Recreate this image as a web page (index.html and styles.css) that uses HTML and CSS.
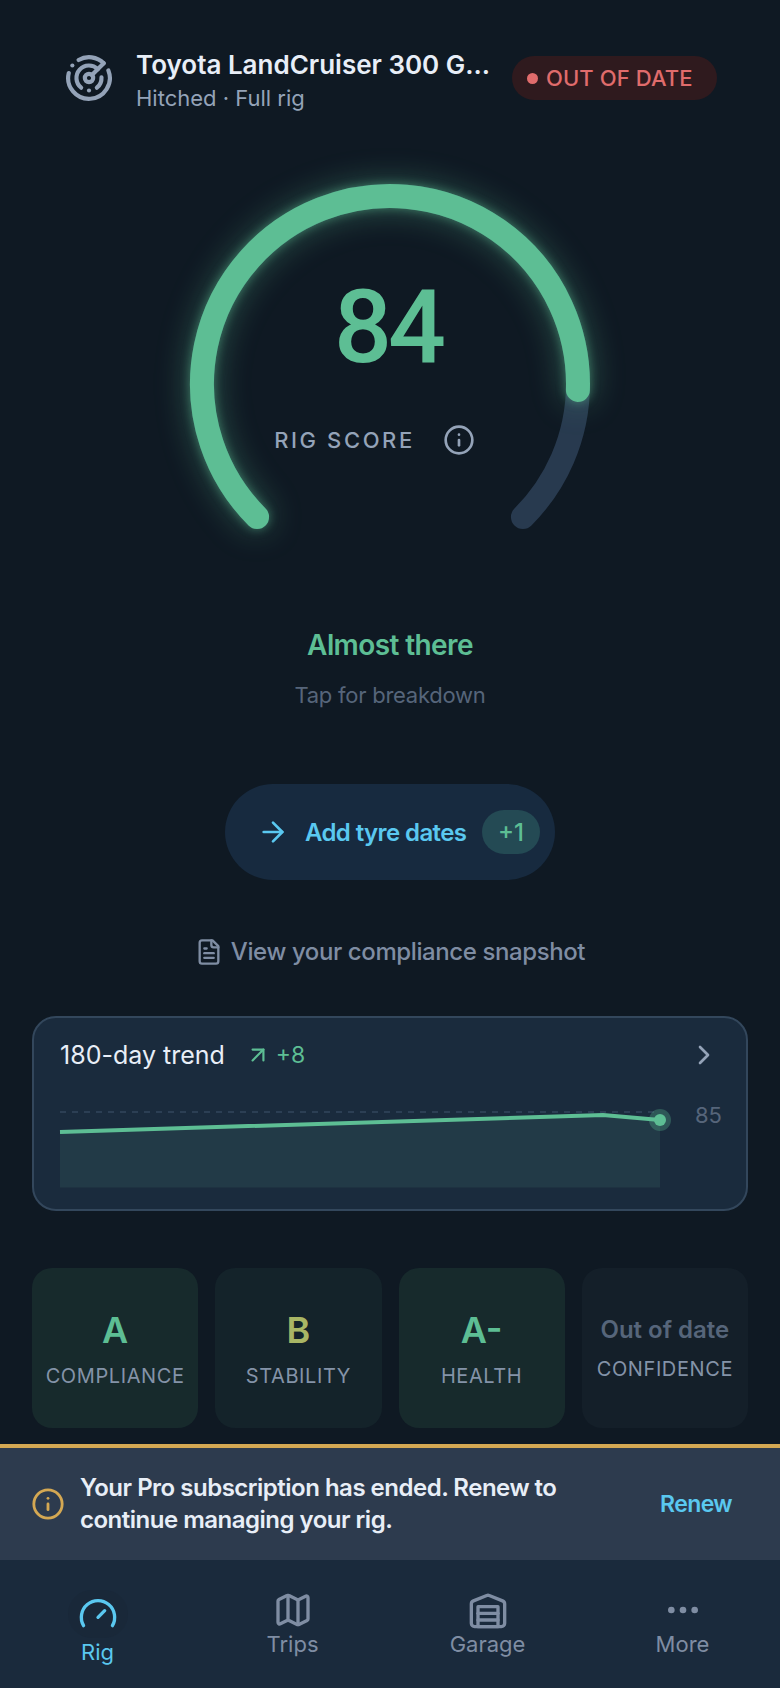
FILE: index.html
```html
<!DOCTYPE html>
<html lang="en">
<head>
    <meta charset="UTF-8">
    <meta name="viewport" content="width=device-width, initial-scale=1.0">
    <title>Rig</title>
    <link rel="stylesheet" href="styles.css">
</head>
<body>
    <main class="screen">
        <header class="top">
            <svg class="icon top-icon" viewBox="0 0 24 24">
                <path d="M19.07 4.93A10 10 0 0 0 6.99 3.34"/>
                <path d="M4 6h.01"/>
                <path d="M2.29 9.62A10 10 0 1 0 21.31 8.35"/>
                <path d="M16.24 7.76A6 6 0 1 0 8.23 16.67"/>
                <path d="M12 18h.01"/>
                <path d="M17.99 11.66A6 6 0 0 1 15.77 16.67"/>
                <circle cx="12" cy="12" r="2"/>
                <path d="m13.41 10.59 5.66-5.66"/>
            </svg>
            <div class="top-text">
                <div class="top-title">Toyota LandCruiser 300 G...</div>
                <div class="top-sub">Hitched · Full rig</div>
            </div>
            <div class="status-pill"><span class="status-dot"></span>OUT OF DATE</div>
        </header>

        <section class="gauge">
            <svg class="gauge-arc" viewBox="0 0 400 346">
                <path class="gauge-track" d="M67.06 332.94A188 188 0 1 1 332.94 332.94"/>
                <path class="gauge-fill" d="M67.06 332.94A188 188 0 1 1 387.9 205.9"/>
            </svg>
            <div class="gauge-inner">
                <div class="score">84</div>
                <div class="score-label">
                    <span>RIG SCORE</span>
                    <svg class="icon info-icon" viewBox="0 0 24 24">
                        <circle cx="12" cy="12" r="10"/>
                        <path d="M12 16v-4"/>
                        <path d="M12 8h.01"/>
                    </svg>
                </div>
            </div>
        </section>

        <div class="verdict">Almost there</div>
        <div class="hint">Tap for breakdown</div>

        <div class="cta">
            <svg class="icon cta-icon" viewBox="0 0 24 24">
                <path d="M5 12h14"/>
                <path d="m12 5 7 7-7 7"/>
            </svg>
            <span class="cta-text">Add tyre dates</span>
            <span class="cta-badge">+1</span>
        </div>

        <div class="snapshot">
            <svg class="icon snapshot-icon" viewBox="0 0 24 24">
                <path d="M15 2H6a2 2 0 0 0-2 2v16a2 2 0 0 0 2 2h12a2 2 0 0 0 2-2V7Z"/>
                <path d="M14 2v4a2 2 0 0 0 2 2h4"/>
                <path d="M10 9H8"/>
                <path d="M16 13H8"/>
                <path d="M16 17H8"/>
            </svg>
            <span>View your compliance snapshot</span>
        </div>

        <section class="trend">
            <div class="trend-head">
                <span class="trend-title">180-day trend</span>
                <svg class="icon trend-arrow" viewBox="0 0 24 24">
                    <path d="M7 7h10v10"/>
                    <path d="M7 17 17 7"/>
                </svg>
                <span class="trend-delta">+8</span>
                <svg class="icon trend-chevron" viewBox="0 0 24 24">
                    <path d="m9 18 6-6-6-6"/>
                </svg>
            </div>
            <div class="trend-chart">
                <svg class="spark" viewBox="0 0 620 92">
                    <path class="spark-goal" d="M0 6H600"/>
                    <path class="spark-area" d="M0 26L543 9L600 14V81.5H0Z"/>
                    <path class="spark-line" d="M0 26L543 9L600 14"/>
                    <circle class="spark-halo" cx="600" cy="14" r="11"/>
                    <circle class="spark-dot" cx="600" cy="14" r="6"/>
                </svg>
                <span class="spark-value">85</span>
            </div>
        </section>

        <section class="grades">
            <div class="grade grade-good">
                <div class="grade-letter green">A</div>
                <div class="grade-name">COMPLIANCE</div>
            </div>
            <div class="grade grade-mid">
                <div class="grade-letter olive">B</div>
                <div class="grade-name">STABILITY</div>
            </div>
            <div class="grade grade-good">
                <div class="grade-letter green">A-</div>
                <div class="grade-name">HEALTH</div>
            </div>
            <div class="grade grade-off">
                <div class="grade-stale">Out of date</div>
                <div class="grade-name">CONFIDENCE</div>
            </div>
        </section>
    </main>

    <div class="banner">
        <svg class="icon banner-icon" viewBox="0 0 24 24">
            <circle cx="12" cy="12" r="10"/>
            <path d="M12 16v-4"/>
            <path d="M12 8h.01"/>
        </svg>
        <p class="banner-text">Your Pro subscription has ended. Renew to continue managing your rig.</p>
        <span class="banner-link">Renew</span>
    </div>

    <nav class="tabs">
        <div class="tab tab-active">
            <span class="tab-halo">
                <svg class="icon tab-icon" viewBox="0 0 24 24">
                    <path d="m12 14 4-4"/>
                    <path d="M3.34 19a10 10 0 1 1 17.32 0"/>
                </svg>
            </span>
            <span class="tab-label">Rig</span>
        </div>
        <div class="tab">
            <svg class="icon tab-icon" viewBox="0 0 24 24">
                <path d="M14.106 5.553a2 2 0 0 0 1.788 0l3.659-1.83A1 1 0 0 1 21 4.619v12.764a1 1 0 0 1-.553.894l-4.553 2.277a2 2 0 0 1-1.788 0l-4.212-2.106a2 2 0 0 0-1.788 0l-3.659 1.83A1 1 0 0 1 3 19.381V6.618a1 1 0 0 1 .553-.894l4.553-2.277a2 2 0 0 1 1.788 0z"/>
                <path d="M15 5.764v15"/>
                <path d="M9 3.236v15"/>
            </svg>
            <span class="tab-label">Trips</span>
        </div>
        <div class="tab">
            <svg class="icon tab-icon" viewBox="0 0 24 24">
                <path d="M22 8.35V20a2 2 0 0 1-2 2H4a2 2 0 0 1-2-2V8.35A2 2 0 0 1 3.26 6.5l8-3.2a2 2 0 0 1 1.48 0l8 3.2A2 2 0 0 1 22 8.35Z"/>
                <path d="M6 18h12"/>
                <path d="M6 14h12"/>
                <rect x="6" y="10" width="12" height="12"/>
            </svg>
            <span class="tab-label">Garage</span>
        </div>
        <div class="tab">
            <svg class="icon tab-icon" viewBox="0 0 24 24">
                <circle cx="12" cy="12" r="1"/>
                <circle cx="19" cy="12" r="1"/>
                <circle cx="5" cy="12" r="1"/>
            </svg>
            <span class="tab-label">More</span>
        </div>
    </nav>
</body>
</html>
```

FILE: styles.css
```css
* {
    box-sizing: border-box;
}

body {
    width: 780px;
    height: 1688px;
    margin: 0;
    overflow: hidden;
    display: flex;
    flex-direction: column;
    font-family: Inter, "Liberation Sans", sans-serif;
    background-color: #0f1923;
    color: #e8eef7;
}

.icon {
    display: block;
    flex: none;
    fill: none;
    stroke: currentColor;
    stroke-width: 2;
    stroke-linecap: round;
    stroke-linejoin: round;
}

.screen {
    flex: 1;
    display: flex;
    flex-direction: column;
    align-items: center;
    padding: 52px 32px 0;
}

/* header */
.top {
    width: 100%;
    height: 52px;
    display: flex;
    align-items: center;
    padding-left: 32px;
}

.top-icon {
    width: 50px;
    height: 50px;
    color: #94a3b8;
}

.top-text {
    width: 354px;
    margin-left: 22px;
    padding-top: 5px;
}

.top-title {
    font-size: 26px;
    line-height: 30px;
    font-weight: 600;
    white-space: nowrap;
}

.top-sub {
    margin-top: 5px;
    font-size: 22px;
    line-height: 26px;
    color: #94a3b8;
}

.status-pill {
    margin-left: 22px;
    height: 44px;
    padding: 0 24px 0 15px;
    display: flex;
    align-items: center;
    gap: 8px;
    border-radius: 22px;
    background-color: #2f1a1e;
    color: #e06c6c;
    font-size: 22px;
    font-weight: 500;
    letter-spacing: 0.1px;
    white-space: nowrap;
}

.status-dot {
    width: 11px;
    height: 11px;
    border-radius: 50%;
    background-color: #e06c6c;
}

/* gauge */
.gauge {
    position: relative;
    width: 400px;
    height: 346px;
    margin-top: 80px;
    flex: none;
}

.gauge-arc {
    display: block;
    width: 400px;
    height: 346px;
    overflow: visible;
    fill: none;
    stroke-width: 24;
    stroke-linecap: round;
}

.gauge-track {
    stroke: #283a4f;
}

.gauge-fill {
    stroke: #5dbe94;
    filter: drop-shadow(0 0 5px rgba(93, 190, 148, 0.5)) drop-shadow(0 0 16px rgba(93, 190, 148, 0.4));
}

.gauge-inner {
    position: absolute;
    top: 83px;
    left: 0;
    width: 100%;
    display: flex;
    flex-direction: column;
    align-items: center;
}

.score {
    padding-right: 4px;
    font-family: Roboto, Inter, sans-serif;
    font-size: 102px;
    line-height: 120px;
    font-weight: 500;
    letter-spacing: -4px;
    color: #5dbe94;
}

.score-label {
    margin-top: 37px;
    padding-right: 31px;
    display: flex;
    align-items: center;
    gap: 28px;
    font-size: 22px;
    font-weight: 500;
    letter-spacing: 2.6px;
    color: #94a3b8;
}

.info-icon {
    width: 32px;
    height: 32px;
}

.verdict {
    margin-top: 98px;
    font-size: 28px;
    line-height: 34px;
    font-weight: 600;
    letter-spacing: -0.6px;
    color: #5dbe94;
}

.hint {
    margin-top: 20px;
    font-size: 22px;
    line-height: 26px;
    letter-spacing: -0.25px;
    color: #56657a;
}

/* call to action */
.cta {
    margin-top: 76px;
    width: 330px;
    height: 96px;
    padding: 0 15px 0 32px;
    display: flex;
    align-items: center;
    border-radius: 48px;
    background-color: #172a3f;
    color: #5ac8f0;
}

.cta-icon {
    width: 32px;
    height: 32px;
}

.cta-text {
    margin-left: 16px;
    font-size: 24px;
    font-weight: 600;
    letter-spacing: -0.6px;
    white-space: nowrap;
}

.cta-badge {
    margin-left: auto;
    width: 58px;
    height: 44px;
    display: flex;
    align-items: center;
    justify-content: center;
    border-radius: 22px;
    background-color: #244a54;
    color: #5dbe94;
    font-size: 24px;
    font-weight: 500;
}

.snapshot {
    margin-top: 57px;
    display: flex;
    align-items: center;
    gap: 8px;
    font-size: 24px;
    line-height: 30px;
    font-weight: 500;
    letter-spacing: -0.4px;
    color: #7f8da3;
}

.snapshot-icon {
    width: 28px;
    height: 28px;
}

/* trend card */
.trend {
    margin-top: 49px;
    width: 716px;
    height: 195px;
    padding: 20px 26px 0;
    flex: none;
    border: 2px solid #33475c;
    border-radius: 24px;
    background-color: #1a2b3d;
}

.trend-head {
    height: 34px;
    display: flex;
    align-items: center;
}

.trend-title {
    font-size: 25px;
}

.trend-arrow {
    width: 26px;
    height: 26px;
    margin-left: 20px;
    color: #5dbe94;
}

.trend-delta {
    margin-left: 5px;
    font-size: 23px;
    color: #5dbe94;
}

.trend-chevron {
    width: 32px;
    height: 32px;
    margin-left: auto;
    color: #94a3b8;
}

.trend-chart {
    margin-top: 34px;
    display: flex;
    align-items: flex-start;
}

.spark {
    display: block;
    width: 620px;
    height: 92px;
    flex: none;
    overflow: visible;
}

.spark-goal {
    stroke: #33475c;
    stroke-width: 1.5;
    stroke-dasharray: 6 6;
}

.spark-area {
    fill: #223a47;
}

.spark-line {
    fill: none;
    stroke: #5dbe94;
    stroke-width: 4;
    stroke-linejoin: round;
}

.spark-halo {
    fill: #5dbe94;
    opacity: 0.3;
}

.spark-dot {
    fill: #5dbe94;
}

.spark-value {
    margin: -4px 0 0 15px;
    font-size: 22px;
    line-height: 26px;
    color: #56657a;
}

/* grade cards */
.grades {
    margin-top: 57px;
    width: 716px;
    height: 160px;
    flex: none;
    display: grid;
    grid-template-columns: repeat(4, 1fr);
    gap: 17px;
}

.grade {
    display: flex;
    flex-direction: column;
    align-items: center;
    padding-top: 40px;
    border-radius: 20px;
}

.grade-good {
    background-color: #172a2c;
}

.grade-mid {
    background-color: #14232a;
}

.grade-off {
    background-color: #141f29;
}

.grade-letter {
    font-size: 36px;
    line-height: 44px;
    font-weight: 600;
}

.green {
    color: #5dbe94;
}

.olive {
    color: #a9b665;
}

.grade-stale {
    font-size: 24px;
    line-height: 44px;
    font-weight: 600;
    color: #56657a;
}

.grade-name {
    margin-top: 11px;
    font-size: 20px;
    line-height: 26px;
    letter-spacing: 0.6px;
    color: #8493a8;
}

.grade-off .grade-name {
    margin-top: 4px;
}

/* renew banner */
.banner {
    height: 116px;
    flex: none;
    display: flex;
    align-items: center;
    padding: 0 48px 0 31px;
    border-top: 4px solid #d4a853;
    background-color: #2d3b4e;
}

.banner-icon {
    width: 34px;
    height: 34px;
    color: #d4a853;
}

.banner-text {
    width: 500px;
    margin: 0 0 0 15px;
    font-size: 24px;
    line-height: 32px;
    font-weight: 600;
    letter-spacing: -0.5px;
}

.banner-link {
    margin-left: auto;
    font-size: 23px;
    font-weight: 600;
    letter-spacing: -0.6px;
    color: #5ac8f0;
}

/* bottom nav */
.tabs {
    height: 128px;
    flex: none;
    display: grid;
    grid-template-columns: repeat(4, 1fr);
    background-color: #1a2a3c;
}

.tab {
    display: flex;
    flex-direction: column;
    align-items: center;
    padding-top: 30px;
    color: #7f8da3;
}

.tab-active {
    color: #5ac8f0;
}

.tab-halo {
    width: 60px;
    height: 48px;
    border-radius: 24px;
    display: flex;
    align-items: center;
    justify-content: center;
    background-color: #192839;
}

.tab-icon {
    width: 40px;
    height: 40px;
}

.tab-label {
    font-size: 22px;
    line-height: 28px;
}
```
